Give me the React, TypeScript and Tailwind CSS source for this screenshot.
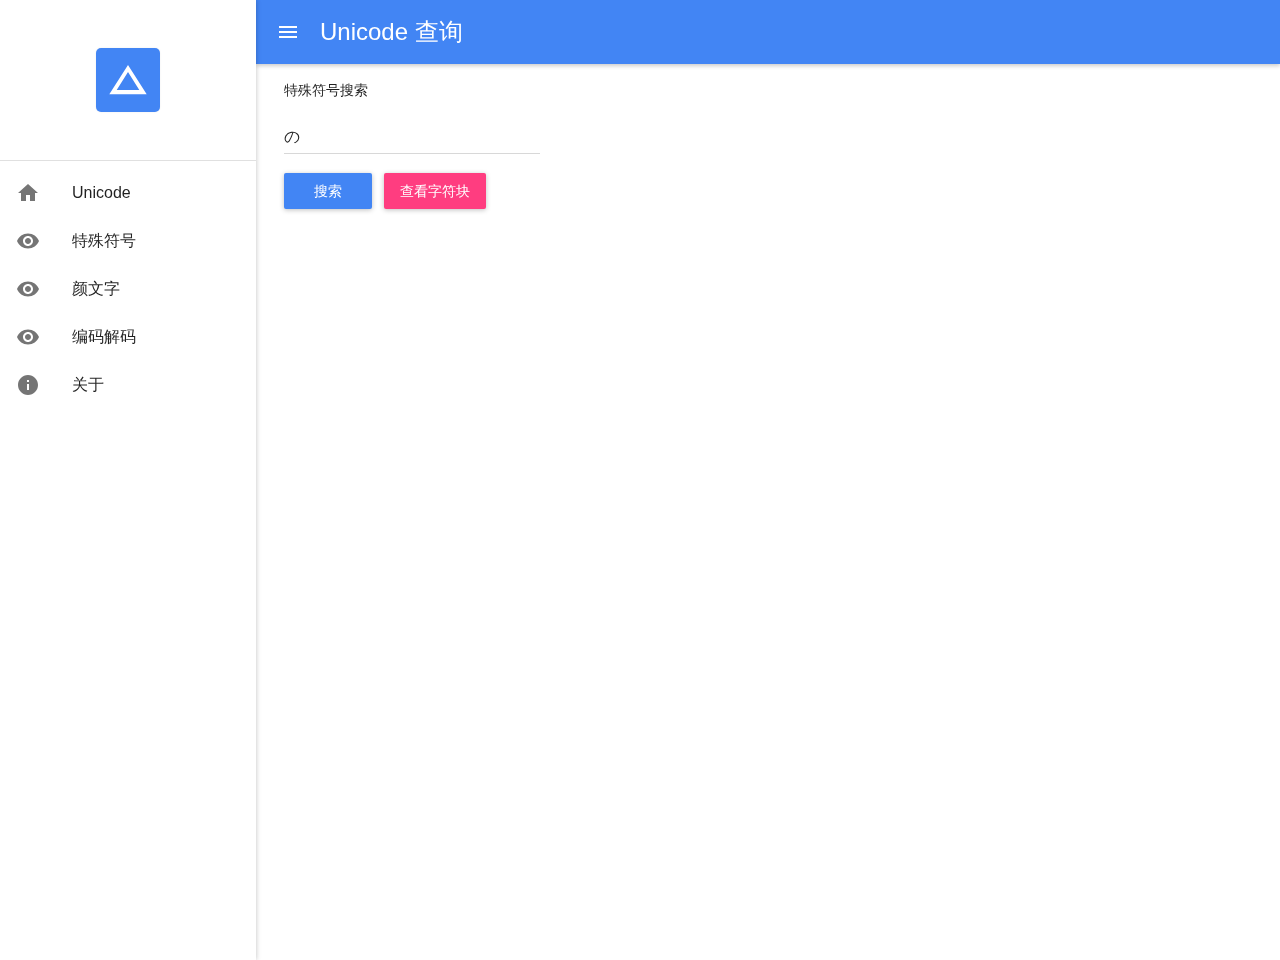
const home = "M10 20v-6h4v6h5v-8h3L12 3 2 12h3v8z";
const eye =
  "M12 4.5C7 4.5 2.73 7.61 1 12c1.73 4.39 6 7.5 11 7.5s9.27-3.11 11-7.5c-1.73-4.39-6-7.5-11-7.5zM12 17c-2.76 0-5-2.24-5-5s2.24-5 5-5 5 2.24 5 5-2.24 5-5 5zm0-8c-1.66 0-3 1.34-3 3s1.34 3 3 3 3-1.34 3-3-1.34-3-3-3z";
const info =
  "M12 2C6.48 2 2 6.48 2 12s4.48 10 10 10 10-4.48 10-10S17.52 2 12 2zm1 15h-2v-6h2v6zm0-8h-2V7h2v2z";

const navItems = [
  { label: "Unicode", icon: home },
  { label: "特殊符号", icon: eye },
  { label: "颜文字", icon: eye },
  { label: "编码解码", icon: eye },
  { label: "关于", icon: info },
];

function Sidebar() {
  return (
    <aside className="z-20 flex w-[256px] shrink-0 flex-col bg-white shadow-[0_0_5px_rgba(0,0,0,0.25)]">
      <div className="flex h-[161px] shrink-0 items-center justify-center border-b border-[#e0e0e0]">
        <div className="flex h-16 w-16 items-center justify-center rounded-[5px] bg-[#4285f4] shadow-[0_0_2px_rgba(0,0,0,0.08)]">
          <svg width="38" height="32" viewBox="0 0 38 32">
            <path fillRule="evenodd" fill="#fff" d="M19 1 37.7 30.3H.3ZM19 8 7.7 26H30.3Z" />
          </svg>
        </div>
      </div>
      <nav className="flex flex-col pt-2 will-change-transform">
        {navItems.map((item) => (
          <div key={item.label} className="flex h-12 items-center pl-4">
            <svg width="24" height="24" viewBox="0 0 24 24" fill="#757575" className="shrink-0">
              <path d={item.icon} />
            </svg>
            <span className="ml-8 text-base text-[rgba(0,0,0,0.87)]">{item.label}</span>
          </div>
        ))}
      </nav>
    </aside>
  );
}

export default function App() {
  return (
    <div className="flex h-[960px] w-[1280px] overflow-hidden bg-white font-['Liberation_Sans',sans-serif]">
      <Sidebar />
      <div className="flex min-w-0 flex-1 flex-col">
        <header className="z-10 flex h-16 shrink-0 items-center bg-[#4285f4] pl-5 text-white shadow-[0_2px_4px_rgba(0,0,0,0.2)]">
          <svg width="24" height="24" viewBox="0 0 24 24" fill="#fff" className="shrink-0">
            <path d="M3 18h18v-2H3v2zm0-5h18v-2H3v2zm0-7v2h18V6H3z" />
          </svg>
          <h1 className="ml-5 text-[24px] leading-8 will-change-transform">Unicode 查询</h1>
        </header>
        <main className="flex flex-col items-start pl-7 pt-4 will-change-transform">
          <p className="text-sm leading-5 text-[rgba(0,0,0,0.87)]">特殊符号搜索</p>
          <div className="mt-5 flex h-[34px] w-64 items-center border-b border-[#d8d8d8] text-base text-[rgba(0,0,0,0.87)]">
            の
          </div>
          <div className="mt-[19px] flex gap-3">
            <button className="h-9 w-[88px] rounded-[2px] bg-[#4285f4] text-sm text-white shadow-[0_1px_5px_rgba(0,0,0,0.25)]">
              搜索
            </button>
            <button className="h-9 w-[102px] rounded-[2px] bg-[#ff3d80] text-sm text-white shadow-[0_1px_5px_rgba(0,0,0,0.25)]">
              查看字符块
            </button>
          </div>
        </main>
      </div>
    </div>
  );
}
